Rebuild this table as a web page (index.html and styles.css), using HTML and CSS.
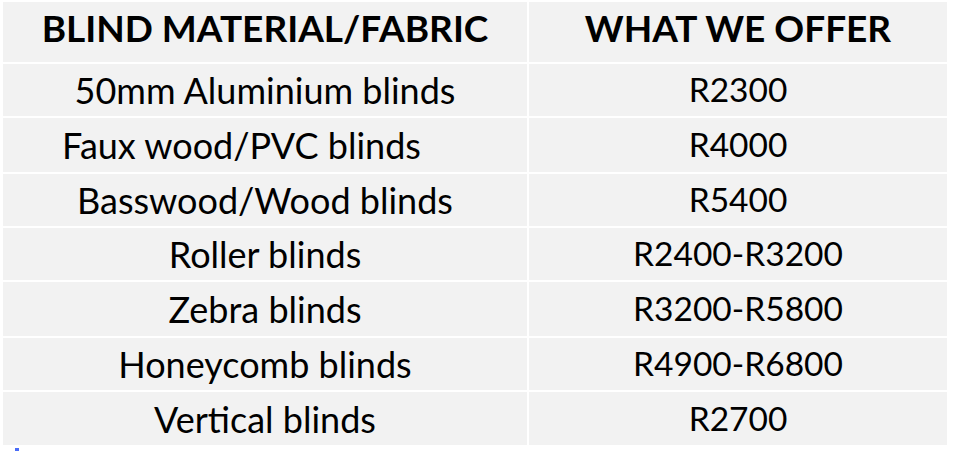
FILE: index.html
```html
<!DOCTYPE html>
<html>
<head>
<meta charset="utf-8">
<link rel="stylesheet" href="styles.css">
</head>
<body>
<div class="table">
  <div class="cell head">BLIND MATERIAL/FABRIC</div>
  <div class="cell head">WHAT WE OFFER</div>
  <div class="cell">50mm Aluminium blinds</div>
  <div class="cell price">R2300</div>
  <div class="cell shift">Faux wood/PVC blinds</div>
  <div class="cell price">R4000</div>
  <div class="cell">Basswood/Wood blinds</div>
  <div class="cell price">R5400</div>
  <div class="cell">Roller blinds</div>
  <div class="cell price">R2400-R3200</div>
  <div class="cell">Zebra blinds</div>
  <div class="cell price">R3200-R5800</div>
  <div class="cell">Honeycomb blinds</div>
  <div class="cell price">R4900-R6800</div>
  <div class="cell">Vertical blinds</div>
  <div class="cell price">R2700</div>
</div>
<div class="dot"></div>
</body>
</html>
```
FILE: styles.css
```css
html, body {
  margin: 0;
  padding: 0;
  background: #ffffff;
}
body {
  padding: 2px 0 0 3px;
  font-family: Lato, "Liberation Sans", sans-serif;
  color: #000;
}
.table {
  display: grid;
  grid-template-columns: 524px 418px;
  grid-template-rows: 60px 52px 54px 52px 52px 54px 52px 53px;
  gap: 2px;
}
.cell {
  background: #f2f2f2;
  display: flex;
  align-items: center;
  justify-content: center;
  font-size: 36px;
  line-height: 1;
}
.head {
  font-weight: 700;
  font-size: 37px;
  padding-bottom: 9px;
}
.price {
  font-size: 33.5px;
}
.shift {
  padding-right: 47px;
}
.dot {
  width: 4px;
  height: 3px;
  margin: 3px 0 0 12px;
  background: #4a6cf7;
}
```
